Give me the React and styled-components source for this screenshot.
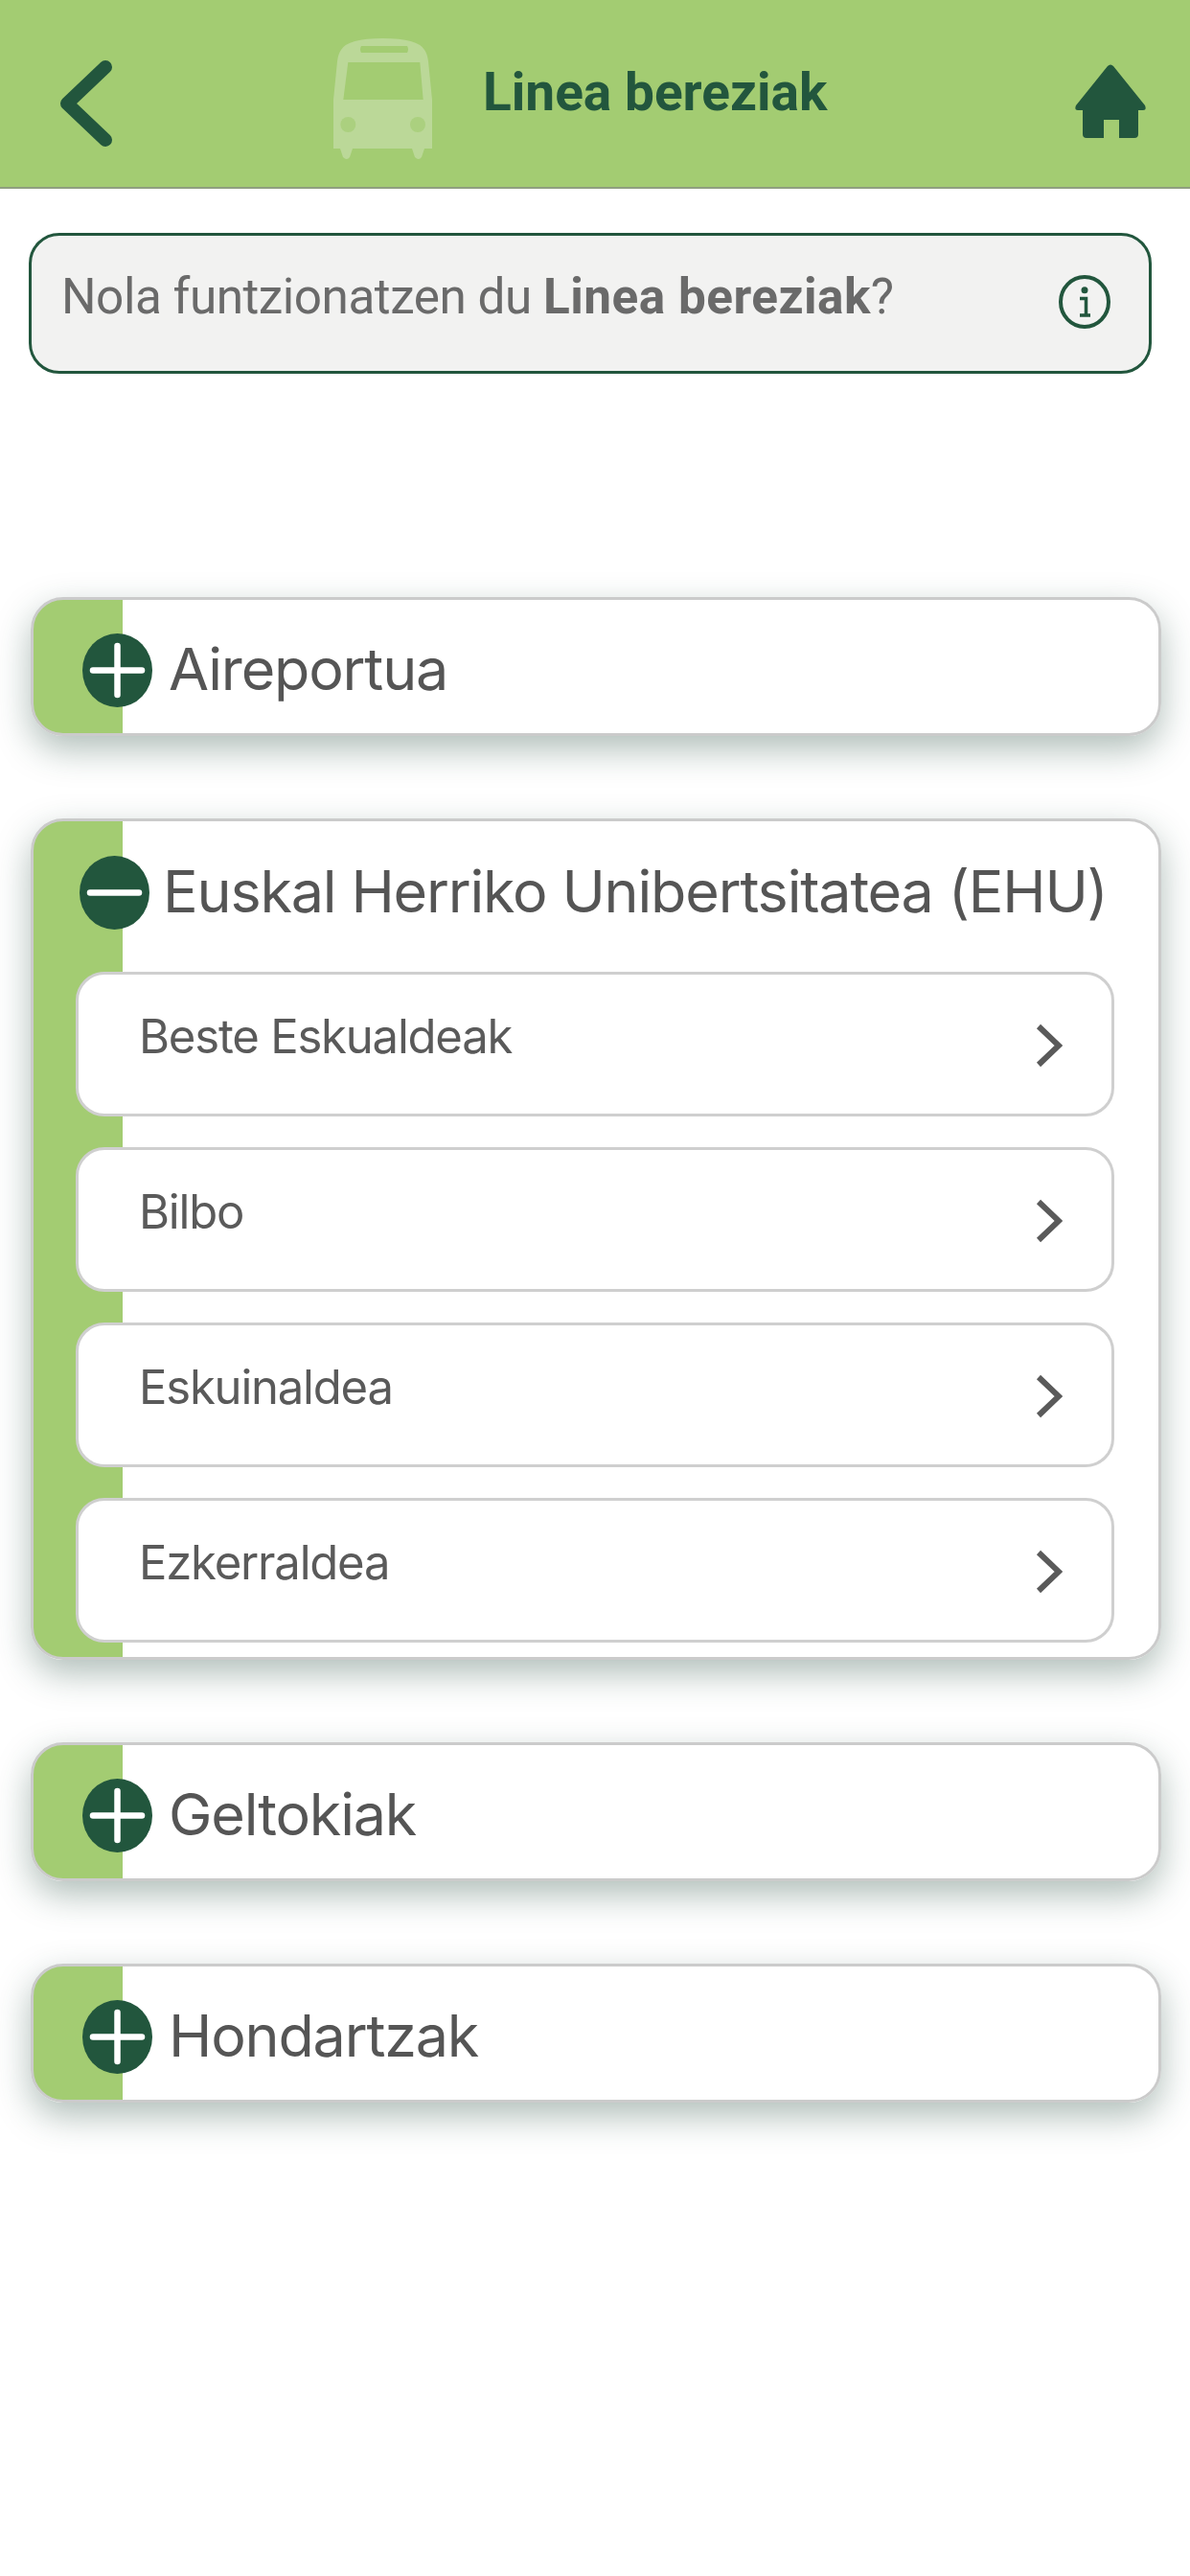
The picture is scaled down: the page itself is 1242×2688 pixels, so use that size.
import React from 'react';
import styled, { createGlobalStyle } from 'styled-components';

const GREEN = '#a3cc72';
const DARK = '#22563d';

const GlobalStyle = createGlobalStyle`
    html, body {
        margin: 0;
        padding: 0;
        background: #ffffff;
    }
    #root {
        min-height: 2688px;
    }
`;

const Page = styled.div`
    display: flex;
    flex-direction: column;
    width: 1242px;
    font-family: 'Inter', 'Liberation Sans', sans-serif;
`;

const TopBar = styled.header`
    display: flex;
    align-items: flex-start;
    box-sizing: border-box;
    height: 197px;
    background: ${GREEN};
    border-bottom: 2px solid #8f9f80;
`;

const BackButton = styled.div`
    display: flex;
    margin: 63px 0 0 60px;
    width: 288px;
`;

const BusIcon = styled.svg`
    display: block;
    margin-top: 40px;
    flex: none;
`;

const TopTitle = styled.h1`
    margin: 66px 0 0 53px;
    width: 618px;
    font-family: 'Roboto', sans-serif;
    font-size: 55px;
    line-height: 60px;
    font-weight: 700;
    color: ${DARK};
`;

const HomeIcon = styled.svg`
    display: block;
    margin: 67px 0 0 0;
    flex: none;
`;

const InfoBox = styled.div`
    display: flex;
    justify-content: space-between;
    box-sizing: border-box;
    width: 1172px;
    height: 147px;
    margin: 46px 0 0 30px;
    padding: 34px 40px 0 31px;
    background: #f2f2f1;
    border: 3px solid ${DARK};
    border-radius: 32px;
`;

const InfoText = styled.div`
    font-family: 'Roboto', sans-serif;
    font-size: 51.3px;
    line-height: 60px;
    letter-spacing: -0.48px;
    color: #6a6a6a;

    b {
        font-weight: 700;
        letter-spacing: 0.48px;
    }
`;

const InfoIcon = styled.svg`
    display: block;
    margin-top: 7px;
    flex: none;
`;

const Accordion = styled.div`
    display: flex;
    flex-direction: column;
    gap: 86px;
    width: 1180px;
    margin: 233px 0 0 32px;
`;

const Card = styled.section`
    box-sizing: border-box;
    border: 3px solid #cbcbcb;
    border-radius: 34px;
    background: linear-gradient(to right, ${GREEN} 93px, #ffffff 93px);
    box-shadow: 0 14px 36px rgba(30, 70, 55, 0.35);
    padding-bottom: ${({ $open }) => ($open ? '15px' : '0')};
`;

const CardHead = styled.div`
    display: flex;
    align-items: center;
    height: ${({ $open }) => ($open ? '157px' : '139px')};
    padding-left: ${({ $open }) => ($open ? '48px' : '51px')};
    padding-top: ${({ $open }) => ($open ? '0' : '8px')};
    padding-bottom: ${({ $open }) => ($open ? '9px' : '0')};
    box-sizing: border-box;
`;

const Toggle = styled.svg`
    display: block;
    flex: none;
    margin-right: ${({ $open }) => ($open ? '14px' : '17px')};
`;

const CardTitle = styled.h2`
    margin: 0 0 3px;
    font-size: 61px;
    line-height: 72px;
    letter-spacing: -1.17px;
    font-weight: 400;
    color: #555555;
    white-space: nowrap;
`;

const SubList = styled.div`
    display: flex;
    flex-direction: column;
    gap: 32px;
    margin: 0 46px 0 44px;
`;

const SubRow = styled.div`
    display: flex;
    justify-content: space-between;
    align-items: flex-start;
    box-sizing: border-box;
    height: 151px;
    padding: 35px 51px 0 63px;
    background: #ffffff;
    border: 3px solid #cfcfcf;
    border-radius: 30px;
`;

const SubLabel = styled.span`
    font-size: 49px;
    line-height: 60px;
    letter-spacing: -1.2px;
    color: #5a5a5a;
`;

const Chevron = styled.svg`
    display: block;
    margin-top: 16px;
    flex: none;
`;

const BackIcon = () => (
    <svg width="60" height="92" viewBox="0 0 60 92">
        <path d="M50 7 L10 45 L50 83" fill="none" stroke={DARK} strokeWidth="14" strokeLinecap="round" strokeLinejoin="round" />
    </svg>
);

const Bus = () => (
    <BusIcon width="103" height="128" viewBox="0 0 103 128">
        <path
            fill="#bbd898"
            fillRule="evenodd"
            d="M51.500 0 Q88 0 95 12 Q98 16 99 24 L103 64 V115 H95 L92 124 Q89 128 85 124 L82 115 H20 L17 124 Q14 128 10 124 L7 115 H0 V64 L4 24 Q5 16 8 12 Q15 0 51.500 0 Z M29 8 Q27 11.500 29 15 H77 Q79 11.500 77 8 Z M15.300 25 L10.300 64 H93.700 L90.300 25 Z"
        />
        <circle cx="15.300" cy="90" r="8" fill="#abd07f" />
        <circle cx="88" cy="90" r="8" fill="#abd07f" />
    </BusIcon>
);

const Home = () => (
    <HomeIcon width="74" height="77" viewBox="0 0 74 77">
        <path
            fill={DARK}
            d="M34 2 Q37 -1 40 2 L73 43 Q75 48 71 48 H66 V73 Q66 77 62 77 H46 V58 H30 V77 H12 Q8 77 8 73 V48 H3 Q-1 48 1 43 Z"
        />
    </HomeIcon>
);

const Info = () => (
    <InfoIcon width="54" height="56" viewBox="0 0 54 56">
        <ellipse cx="27" cy="28" rx="25" ry="26" fill="none" stroke={DARK} strokeWidth="4" />
        <circle cx="27" cy="15.700" r="3.500" fill={DARK} />
        <path d="M22 24.500 H28.500 V41 M22 42 H33" fill="none" stroke={DARK} strokeWidth="3.500" />
    </InfoIcon>
);

const ToggleIcon = ({ open }) => (
    <Toggle $open={open} width="73" height="77" viewBox="0 0 73 77">
        <ellipse cx="36.500" cy="38.500" rx="36.500" ry="38.500" fill={DARK} />
        <path d="M11 38.500 H62" stroke="#ffffff" strokeWidth="6.500" strokeLinecap="round" />
        {!open && <path d="M36.500 13 V64" stroke="#ffffff" strokeWidth="6.500" strokeLinecap="round" />}
    </Toggle>
);

const ChevronIcon = () => (
    <Chevron width="28" height="46" viewBox="0 0 28 46">
        <path d="M3 3 L24 23 L3 43" fill="none" stroke="#5a5a5a" strokeWidth="6" />
    </Chevron>
);

const subItems = ['Beste Eskualdeak', 'Bilbo', 'Eskuinaldea', 'Ezkerraldea'];

const App = () => {
    return (
        <>
            <GlobalStyle />
            <Page>
                <TopBar>
                    <BackButton>
                        <BackIcon />
                    </BackButton>
                    <Bus />
                    <TopTitle>Linea bereziak</TopTitle>
                    <Home />
                </TopBar>

                <InfoBox>
                    <InfoText>
                        Nola funtzionatzen du <b>Linea bereziak</b>?
                    </InfoText>
                    <Info />
                </InfoBox>

                <Accordion>
                    <Card>
                        <CardHead>
                            <ToggleIcon />
                            <CardTitle>Aireportua</CardTitle>
                        </CardHead>
                    </Card>

                    <Card $open>
                        <CardHead $open>
                            <ToggleIcon open />
                            <CardTitle>Euskal Herriko Unibertsitatea (EHU)</CardTitle>
                        </CardHead>
                        <SubList>
                            {subItems.map((item) => (
                                <SubRow key={item}>
                                    <SubLabel>{item}</SubLabel>
                                    <ChevronIcon />
                                </SubRow>
                            ))}
                        </SubList>
                    </Card>

                    <Card>
                        <CardHead>
                            <ToggleIcon />
                            <CardTitle>Geltokiak</CardTitle>
                        </CardHead>
                    </Card>

                    <Card>
                        <CardHead>
                            <ToggleIcon />
                            <CardTitle>Hondartzak</CardTitle>
                        </CardHead>
                    </Card>
                </Accordion>
            </Page>
        </>
    );
};

export default App;
